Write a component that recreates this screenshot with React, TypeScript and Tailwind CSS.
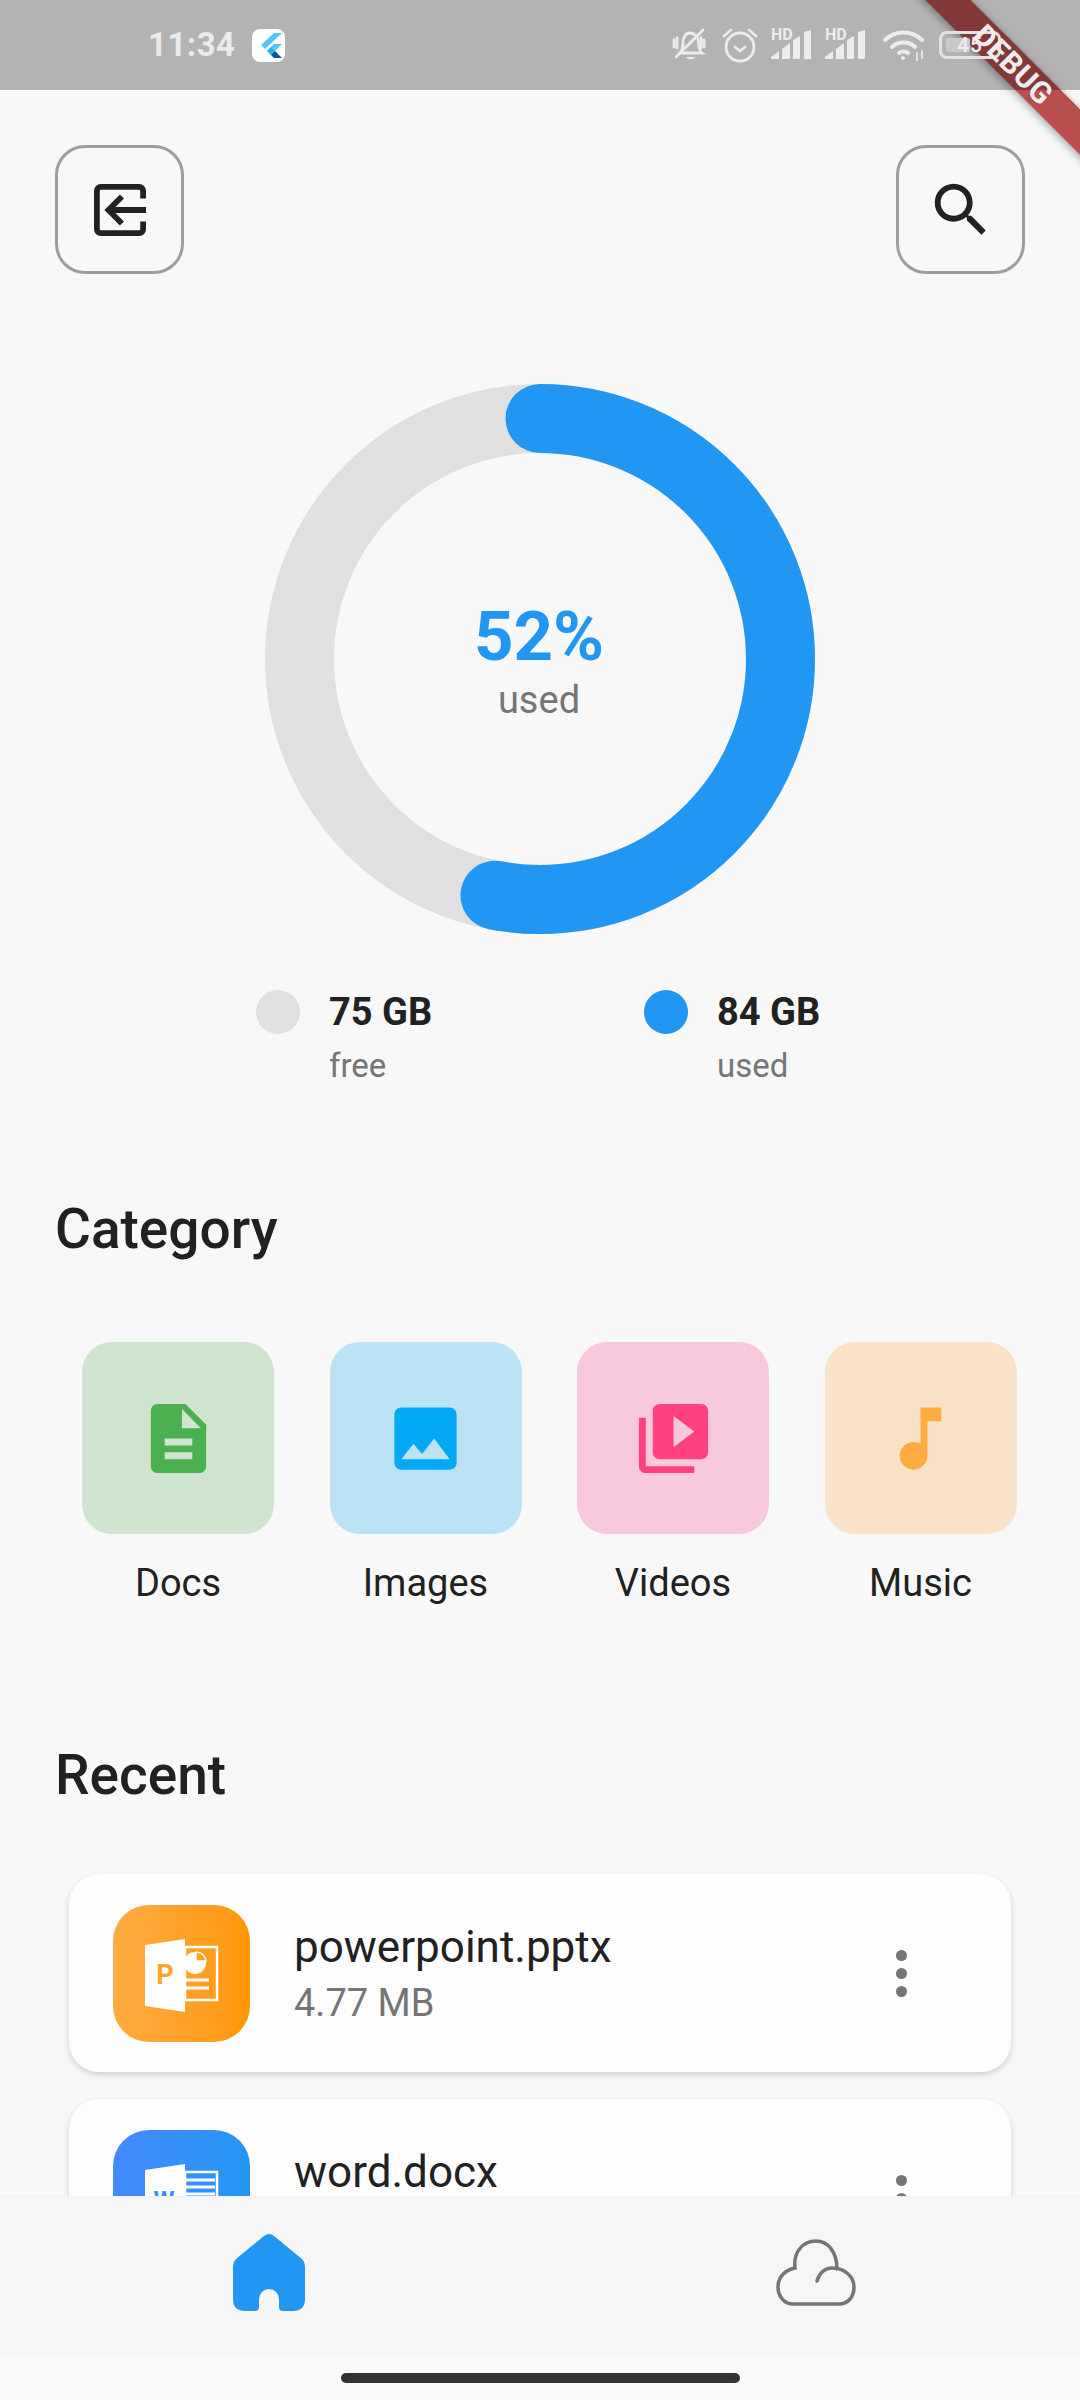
import React from "react";

const P = ({ d, className }: { d: string; className?: string }) => (
  <svg viewBox="0 0 24 24" className={className} fill="currentColor"><path d={d} /></svg>
);

function Signal() {
  return (
    <div className="relative w-[42px] h-[30px]">
      <span className="absolute left-0 top-[-3px] text-[16px] leading-[16px] font-bold text-[#ececec]">HD</span>
      <svg viewBox="0 0 42 30" className="absolute inset-0 w-[42px] h-[30px]" fill="#ececec">
        <path d="M0 29v-2l8-6v8zM11 29V19l8-6v16zM22 29V10l7-4v23zM33 29V2l7-2v29z" />
      </svg>
    </div>
  );
}

function StatusBar() {
  return (
    <div className="relative z-20 h-[90px] shrink-0 bg-black/[.28] flex items-center pl-[148px]">
      <span className="w-[104px] text-[33px] leading-[40px] font-bold text-[#ebebeb] tracking-[0.5px] mb-[1px]">11:34</span>
      <div className="w-[33px] h-[33px] rounded-[8px] bg-white flex items-center justify-center">
        <svg viewBox="0 0 33 33" className="w-[33px] h-[33px]">
          <path d="M22 4h8L13 20l-4-4z" fill="#54c5f8" />
          <path d="M30 15h-8l-7 7 4 4z" fill="#54c5f8" />
          <path d="M15 22l4-4 4 4-4 4z" fill="#29b6f6" />
          <path d="M19 26l4-4 7 7h-8z" fill="#01579b" />
        </svg>
      </div>
      <svg viewBox="0 0 36 36" className="w-[36px] h-[36px] ml-[387px]" fill="none" stroke="#ececec" strokeWidth="2.8" strokeLinecap="round">
        <path d="M8 26c3-3 3-6 3-11 0-5 3-9 7-9 2 0 4 1 5 2M26 12c1 6 0 11 4 14H9" />
        <path d="M14 30c2 3 7 3 9 0z" fill="#ececec" stroke="none" />
        <path d="M4 30L31 3M2 13v7M5 11v10M32 13v7M29 11v10" />
      </svg>
      <svg viewBox="0 0 36 36" className="w-[36px] h-[36px] ml-[14px]" fill="none" stroke="#ececec" strokeWidth="2.8" strokeLinecap="round" strokeLinejoin="round">
        <circle cx="18" cy="20" r="14" />
        <path d="M13 20l5 4 5-4M2 9l7-6M34 9l-7-6" />
      </svg>
      <div className="ml-[13px]"><Signal /></div>
      <div className="ml-[12px]"><Signal /></div>
      <svg viewBox="0 0 44 32" className="w-[44px] h-[32px] ml-[15px]" fill="none" stroke="#ececec" strokeWidth="4" strokeLinecap="round">
        <path d="M3 11c10-10 27-10 37 0M10 18c6-6 17-6 23 0M17 24c3-2 6-2 9 0" />
        <circle cx="21" cy="29" r="1.5" fill="#ececec" strokeWidth="1" />
        <path d="M35 24v7M40 22v7" strokeWidth="1.8" />
      </svg>
      <div className="ml-[13px] w-[62px] h-[28px] rounded-[8px] border-[3px] border-[#e2e2e2] relative flex items-center justify-center">
        <div className="absolute left-[4px] top-[4px] bottom-[4px] w-[24px] rounded-[2px] bg-[#c8c8c8]" />
        <span className="relative text-[21px] leading-[22px] font-medium text-[#efefef] tracking-[1px]">45</span>
      </div>
    </div>
  );
}

function Donut() {
  return (
    <div className="relative w-[550px] h-[550px] mt-[110px] mx-auto">
      <svg viewBox="0 0 550 550" className="w-[550px] h-[550px]" fill="none" strokeWidth="69">
        <circle cx="275" cy="275" r="240.5" stroke="#e0e0e0" />
        <circle cx="275" cy="275" r="240.5" stroke="#2196f3" strokeLinecap="round" pathLength={100} strokeDasharray="53 100" transform="rotate(-90 275 275)" />
      </svg>
      <div className="absolute inset-0 flex flex-col items-center justify-center pt-[3px]">
        <span className="text-[69px] leading-[76px] font-bold text-[#2196f3] mr-[2px]">52%</span>
        <span className="text-[38px] leading-[44px] text-[#757575] mt-[3px] mr-[2px]">used</span>
      </div>
    </div>
  );
}

function Legend({ color, value, label }: { color: string; value: string; label: string }) {
  return (
    <div className="w-[388px] flex gap-[29px]">
      <div className={`w-[44px] h-[44px] rounded-full ${color}`} />
      <div className="flex flex-col">
        <span className="text-[38px] leading-[44px] font-bold text-[#212121]">{value}</span>
        <span className="text-[33px] leading-[40px] text-[#757575] mt-[12px]">{label}</span>
      </div>
    </div>
  );
}

function Tile({ bg, iconCls, d, label }: { bg: string; iconCls: string; d: string; label: string }) {
  return (
    <div className="w-[192px] flex flex-col items-center">
      <div className={`w-[192px] h-[192px] rounded-[30px] flex items-center justify-center ${bg}`}>
        <P d={d} className={`w-[83px] h-[83px] ${iconCls}`} />
      </div>
      <span className="mt-[27px] text-[38px] leading-[44px] text-[#212121]">{label}</span>
    </div>
  );
}

function FileIcon({ kind }: { kind: "p" | "w" }) {
  const c = kind === "p" ? "#ffa426" : "#3490f6";
  return (
    <svg viewBox="0 0 137 137" className="absolute inset-0 w-[137px] h-[137px]">
      <rect x="72" y="42" width="32" height="53" fill="none" stroke="#fff" strokeWidth="2.5" />
      <path d="M32 40l40-6v73l-40-6z" fill="#fff" />
      {kind === "p" ? (
        <>
          <circle cx="82" cy="58" r="11" fill="#fff" />
          <path d="M83 56v-9a10 10 0 0 1 10 9z" fill={c} stroke="#fff" strokeWidth="1.5" />
          <path d="M72 75h24M72 83h24" stroke="#fff" strokeWidth="3" />
          <text x="52" y="79" textAnchor="middle" fontSize="27" fontWeight="700" fill={c}>P</text>
        </>
      ) : (
        <>
          <path d="M72 50h30M72 57h30M72 64h30M72 71h30M72 78h30" stroke="#fff" strokeWidth="3" />
          <text x="51" y="78" textAnchor="middle" fontSize="24" fontWeight="700" fill={c}>W</text>
        </>
      )}
    </svg>
  );
}

function Card({ grad, kind, name, size, top }: { grad: string; kind: "p" | "w"; name: string; size: string; top: string }) {
  return (
    <div className={`${top} mx-[69px] h-[198px] rounded-[30px] bg-[#fdfdfd] shadow-[0_3px_6px_rgba(0,0,0,0.16)] flex items-center pl-[44px] pr-[104px] shrink-0`}>
      <div className={`relative w-[137px] h-[137px] rounded-[36px] shrink-0 ${grad}`}>
        <FileIcon kind={kind} />
      </div>
      <div className="ml-[44px] flex-1 flex flex-col">
        <span className="text-[44px] leading-[50px] text-[#212121]">{name}</span>
        <span className="text-[38px] leading-[44px] text-[#757575] mt-[9px]">{size}</span>
      </div>
      <div className="w-[11px] flex flex-col gap-[7px]">
        <div className="w-[11px] h-[11px] rounded-full bg-[#757575]" />
        <div className="w-[11px] h-[11px] rounded-full bg-[#757575]" />
        <div className="w-[11px] h-[11px] rounded-full bg-[#757575]" />
      </div>
    </div>
  );
}

export default function App() {
  return (
    <div className="relative w-[1080px] h-[2400px] overflow-hidden bg-[#f8f8f8] flex flex-col font-['Roboto',sans-serif]">
      <StatusBar />
      {/* Flutter debug banner: the band sits under the status-bar tint, its label over it */}
      <div className="absolute z-10 left-[763px] top-[49px] w-[500px] h-[32px] rotate-45 bg-[#b84e4e] shadow-[0_2px_10px_rgba(0,0,0,0.35)]" />
      <div className="absolute z-30 left-[763px] top-[49px] w-[500px] h-[32px] rotate-45 flex items-center justify-center">
        <span className="text-[30px] leading-[32px] font-bold text-[#eeeeee] tracking-[0.5px]">DEBUG</span>
      </div>

      <div className="relative flex-1 overflow-hidden flex flex-col">
        <div className="flex justify-between px-[55px] pt-[55px]">
          <div className="w-[129px] h-[129px] rounded-[30px] border-[3px] border-[#9e9e9e] flex items-center justify-center">
            <svg viewBox="0 0 54 54" className="w-[52px] h-[52px]" fill="none" stroke="#212121" strokeWidth="6">
              <path d="M51 15V7a4 4 0 0 0-4-4H7a4 4 0 0 0-4 4v40a4 4 0 0 0 4 4h40a4 4 0 0 0 4-4V39" />
              <path d="M54 27H18M29 13L15 27l14 14" />
            </svg>
          </div>
          <div className="w-[129px] h-[129px] rounded-[30px] border-[3px] border-[#9e9e9e] flex items-center justify-center">
            <P className="w-[70px] h-[70px] text-[#212121]" d="M15.5 14h-.79l-.28-.27C15.41 12.59 16 11.11 16 9.5 16 5.91 13.09 3 9.5 3S3 5.91 3 9.5 5.91 16 9.5 16c1.61 0 3.09-.59 4.23-1.57l.27.28v.79l5 4.99L20.49 19l-4.99-5zm-6 0C7.01 14 5 11.99 5 9.5S7.01 5 9.5 5 14 7.01 14 9.5 11.99 14 9.5 14z" />
          </div>
        </div>

        <Donut />

        <div className="flex pl-[256px] mt-[56px]">
          <Legend color="bg-[#e0e0e0]" value="75 GB" label="free" />
          <Legend color="bg-[#2196f3]" value="84 GB" label="used" />
        </div>

        <h2 className="mt-[113px] pl-[55px] text-[55px] leading-[60px] font-medium text-[#212121]">Category</h2>

        <div className="mt-[83px] pl-[82px] flex gap-[55.5px]">
          <Tile bg="bg-[#cee4cf]" iconCls="text-[#4caf50]" label="Docs" d="M14 2H6c-1.1 0-1.99.9-1.99 2L4 20c0 1.1.89 2 1.99 2H18c1.1 0 2-.9 2-2V8l-6-6zm2 16H8v-2h8v2zm0-4H8v-2h8v2zm-3-5V3.5L18.5 9H13z" />
          <Tile bg="bg-[#bbe3f5]" iconCls="text-[#03a9f4]" label="Images" d="M21 19V5c0-1.1-.9-2-2-2H5c-1.1 0-2 .9-2 2v14c0 1.1.9 2 2 2h14c1.1 0 2-.9 2-2zM8.5 13.5l2.5 3.01L14.5 12l4.5 6H5l3.5-4.5z" />
          <Tile bg="bg-[#f8c9dc]" iconCls="text-[#ff4081]" label="Videos" d="M4 6H2v14c0 1.1.9 2 2 2h14v-2H4V6zm16-4H8c-1.1 0-2 .9-2 2v12c0 1.1.9 2 2 2h12c1.1 0 2-.9 2-2V4c0-1.1-.9-2-2-2zm-8 12.5v-9l6 4.5-6 4.5z" />
          <Tile bg="bg-[#f9e2c8]" iconCls="text-[#ffab40]" label="Music" d="M12 3v10.55c-.59-.34-1.27-.55-2-.55-2.21 0-4 1.79-4 4s1.79 4 4 4 4-1.79 4-4V7h4V3h-6z" />
        </div>

        <h2 className="mt-[140px] pl-[55px] text-[55px] leading-[60px] font-medium text-[#212121]">Recent</h2>

        <Card top="mt-[69px]" grad="bg-gradient-to-r from-[#ffab40] to-[#ff9800]" kind="p" name="powerpoint.pptx" size="4.77 MB" />
        <Card top="mt-[27px]" grad="bg-gradient-to-r from-[#448aff] to-[#2196f3]" kind="w" name="word.docx" size="1.2 MB" />
      </div>

      <div className="relative h-[160px] shrink-0 bg-[#f6f6f6] border-t border-[#f1f1f1] flex">
        <div className="w-1/2 flex items-center justify-center pb-[6px]">
          <svg viewBox="0 0 120 110" className="w-[120px] h-[110px]" fill="#2196f3">
            <path d="M54 17Q59 13 64 17L92 40Q95 43 95 47V80Q95 92 83 92H73Q69 92 69 88V80A10 10 0 0 0 49 80V88Q49 92 45 92H35Q23 92 23 80V47Q23 43 26 40Z" />
          </svg>
        </div>
        <div className="w-1/2 flex items-center justify-center pb-[8px] pl-[10px]">
          <svg viewBox="0 0 110 95" className="w-[110px] h-[95px]" fill="none" stroke="#757575" strokeWidth="3.5" strokeLinecap="round">
            <path d="M57 56C59 48 65 43 72 43C85 43 94 52 94 62C94 72 88 79 79 79H33C24 79 18 71 18 62C18 52 25 45 35 43C33 27 43 16 56 16C68 16 77 27 77 44" />
          </svg>
        </div>
      </div>
      <div className="h-[44px] shrink-0 bg-[#fafafa] flex justify-center pt-[17px]">
        <div className="w-[399px] h-[10px] rounded-full bg-[#333333]" />
      </div>
    </div>
  );
}
